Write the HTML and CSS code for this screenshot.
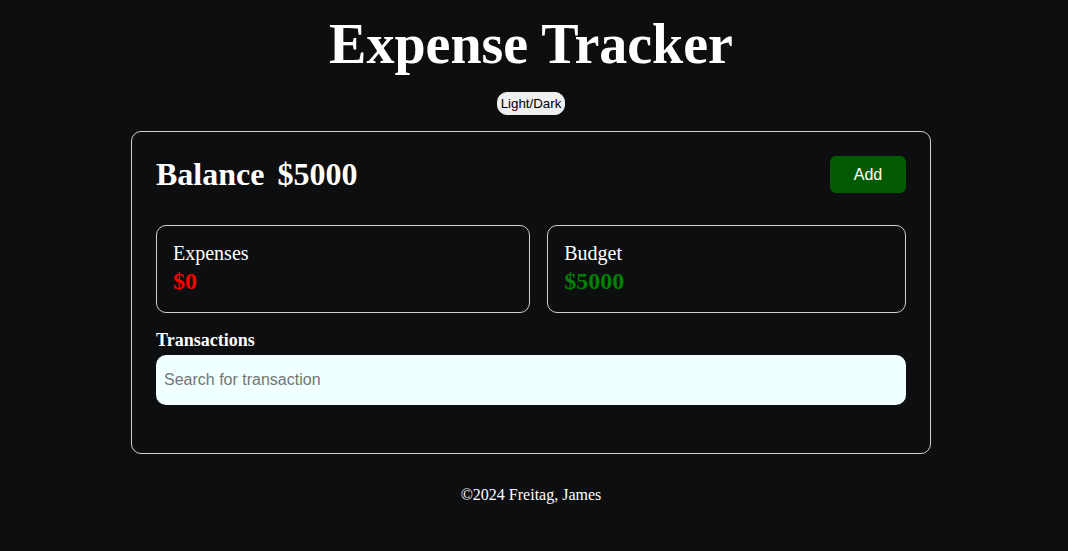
FILE: index.html
```html
<!DOCTYPE html>
<html lang="en">
<head>
<meta charset="utf-8">
<title>Expense Tracker</title>
<link rel="stylesheet" href="styles.css">
</head>
<body>
<div class="page">
  <h1 class="title">Expense Tracker</h1>
  <div class="toggle-row"><button class="toggle">Light/Dark</button></div>
  <main class="card">
    <div class="balance-row">
      <h2 class="balance"><span>Balance</span><span>$5000</span></h2>
      <button class="add">Add</button>
    </div>
    <div class="stats">
      <div class="stat">
        <div class="stat-label">Expenses</div>
        <div class="stat-value red">$0</div>
      </div>
      <div class="stat">
        <div class="stat-label">Budget</div>
        <div class="stat-value green">$5000</div>
      </div>
    </div>
    <h3 class="tx-title">Transactions</h3>
    <input class="search" type="text" placeholder="Search for transaction">
    <div class="tx-list"></div>
  </main>
  <footer class="footer">©2024 Freitag, James</footer>
</div>
</body>
</html>
```
FILE: styles.css
```css
html, body {
  margin: 0;
  padding: 0;
  background: #0d0e10;
  color: #ffffff;
  font-family: "Liberation Serif", "Times New Roman", serif;
}
.page {
  width: 1062px;
  display: flex;
  flex-direction: column;
  align-items: center;
}
.title {
  margin: 12px 0 0;
  font-size: 56px;
  font-weight: bold;
  line-height: 64px;
}
.toggle-row {
  margin-top: 16px;
}
.toggle {
  font-family: "Liberation Sans", Arial, sans-serif;
  font-size: 13.33px;
  color: #000;
  background: #efefef;
  border: 1px solid #efefef;
  border-radius: 10px;
  padding: 2px 3px;
  height: 23px;
}
.card {
  margin-top: 16px;
  width: 800px;
  box-sizing: border-box;
  border: 1px solid #d0d0d0;
  border-radius: 10px;
  padding: 24px 24px 24px;
}
.balance-row {
  display: flex;
  justify-content: space-between;
  align-items: center;
}
.balance {
  margin: 0;
  font-size: 32px;
  display: flex;
  gap: 13px;
}
.add {
  width: 76px;
  height: 37px;
  background: #035a03;
  color: #fff;
  border: none;
  border-radius: 6px;
  font-family: "Liberation Sans", Arial, sans-serif;
  font-size: 16px;
}
.stats {
  margin-top: 32px;
  display: flex;
  gap: 17px;
}
.stat {
  flex: 1 1 auto;
  border: 1px solid #d0d0d0;
  border-radius: 10px;
  padding: 16px 16px;
  height: 88px;
  box-sizing: border-box;
}
.stat-label {
  font-size: 20px;
  line-height: 23px;
}
.stat-value {
  margin-top: 2px;
  font-size: 24px;
  font-weight: bold;
  line-height: 29px;
}
.red { color: #ff0000; }
.green { color: #008000; }
.tx-title {
  margin: 17px 0 4px;
  font-size: 18px;
  line-height: 21px;
}
.search {
  display: block;
  width: 100%;
  height: 50px;
  box-sizing: border-box;
  border: none;
  border-radius: 10px;
  background: #f0ffff;
  padding: 0 8px;
  font-family: "Liberation Sans", Arial, sans-serif;
  font-size: 16px;
  color: #333;
}
.search::placeholder {
  color: #757575;
}
.tx-list {
  height: 24px;
}
.footer {
  margin-top: 32px;
  font-size: 16px;
}
```
